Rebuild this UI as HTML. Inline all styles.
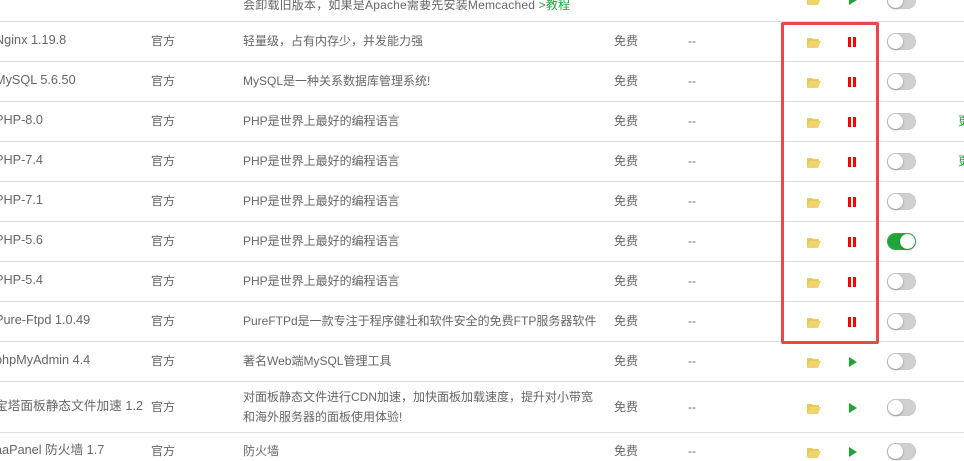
<!DOCTYPE html>
<html><head><meta charset="utf-8"><style>
*{margin:0;padding:0;box-sizing:border-box}
body{width:964px;height:447px;overflow:hidden;background:#fff;font-family:"Liberation Sans","Noto Sans CJK SC",sans-serif;font-size:12px;color:#666;position:relative}
.hl{position:absolute;left:0;width:964px;height:1px;background:#ddd}
.t{position:absolute;white-space:nowrap;line-height:16px}
.n{font-size:12.7px}
.fold{position:absolute;width:14px;height:11px}
.pause{position:absolute;width:8px;height:10px;border-left:3px solid #f00;border-right:3px solid #f00}
.play{position:absolute;width:0;height:0;border-left:8px solid #20a53a;border-top:5px solid transparent;border-bottom:5px solid transparent}
.tg{position:absolute;width:29px;height:17px;border-radius:9px;background:#d0d0d0;box-shadow:inset 0 0 1px #aaa}
.tg::after{content:"";position:absolute;left:1px;top:1px;width:15px;height:15px;border-radius:50%;background:#fff;box-shadow:0 1px 2px rgba(0,0,0,.3)}
.tg.on{background:#20a53a}.tg.on::after{left:13px}
.box{position:absolute;left:781px;top:22px;width:98px;height:322px;border:3px solid #e84848;border-radius:2px}
</style></head><body>
<div class="t" style="left:243px;top:-3px;letter-spacing:.2px">会卸载旧版本，如果是Apache需要先安装Memcached <span style="color:#20a53a">&gt;教程</span></div>
<div class="fold" style="left:807px;top:-6px;"><svg width="14" height="11"><path d="M0 1h5l1 1h6v2H3L0 11z" fill="#e8c95a"/><path d="M3 4h11l-3 7H0z" fill="#f0d56e"/></svg></div>
<div class="play" style="left:849px;top:-5px"></div>
<div class="tg" style="left:887px;top:-8px"></div>

<div class="hl" style="top:21px"></div><div class="hl" style="top:61px"></div><div class="hl" style="top:101px"></div><div class="hl" style="top:141px"></div><div class="hl" style="top:181px"></div><div class="hl" style="top:221px"></div><div class="hl" style="top:261px"></div><div class="hl" style="top:301px"></div><div class="hl" style="top:341px"></div><div class="hl" style="top:381px"></div><div class="hl" style="top:432px"></div>

<div id="rows"></div>
<script>
var R=[["Nginx 1.19.8","轻量级，占有内存少，并发能力强",41,1,0,1],
["MySQL 5.6.50","MySQL是一种关系数据库管理系统!",81,1,0,1],
["PHP-8.0","PHP是世界上最好的编程语言",121,1,0,1],
["PHP-7.4","PHP是世界上最好的编程语言",161,1,0,1],
["PHP-7.1","PHP是世界上最好的编程语言",201,1,0,0],
["PHP-5.6","PHP是世界上最好的编程语言",241,1,1,0],
["PHP-5.4","PHP是世界上最好的编程语言",281,1,0,0],
["Pure-Ftpd 1.0.49","PureFTPd是一款专注于程序健壮和软件安全的免费FTP服务器软件",321,1,0,0],
["phpMyAdmin 4.4","著名Web端MySQL管理工具",361,0,0,0],
["宝塔面板静态文件加速 1.2","",407,0,0,0],
["aaPanel 防火墙 1.7","防火墙",451,0,0,0]];
var h="";
R.forEach(function(r,i){var y=r[2];
h+='<div class="t n" style="left:-5px;top:'+(y-9)+'px">'+r[0]+'</div>';
h+='<div class="t" style="left:151px;top:'+(y-8)+'px">官方</div>';
if(i==9){h+='<div class="t" style="left:243px;top:'+(y-18)+'px">对面板静态文件进行CDN加速，加快面板加载速度，提升对小带宽</div><div class="t" style="left:243px;top:'+(y+2)+'px">和海外服务器的面板使用体验!</div>';}
else h+='<div class="t" style="left:243px;top:'+(y-8)+'px">'+r[1]+'</div>';
h+='<div class="t" style="left:614px;top:'+(y-8)+'px">免费</div>';
h+='<div class="t" style="left:688px;top:'+(y-8)+'px">--</div>';
h+='<div class="fold" style="left:807px;top:'+(y-4)+'px"><svg width="14" height="11"><path d="M0 1h5l1 1h6v2H3L0 11z" fill="#e8c95a"/><path d="M3 4h11l-3 7H0z" fill="#f0d56e"/></svg></div>';
if(r[3])h+='<div class="pause" style="left:848px;top:'+(y-4)+'px"></div>';
else h+='<div class="play" style="left:849px;top:'+(y-4)+'px"></div>';
h+='<div class="tg'+(r[4]?' on':'')+'" style="left:887px;top:'+(y-8)+'px"></div>';
if(r[5]&&i>=2)h+='<div class="t" style="left:958px;top:'+(y-8)+'px;color:#20a53a">更</div>';
});
document.getElementById("rows").innerHTML=h;
</script>
<div class="box"></div>
</body></html>
